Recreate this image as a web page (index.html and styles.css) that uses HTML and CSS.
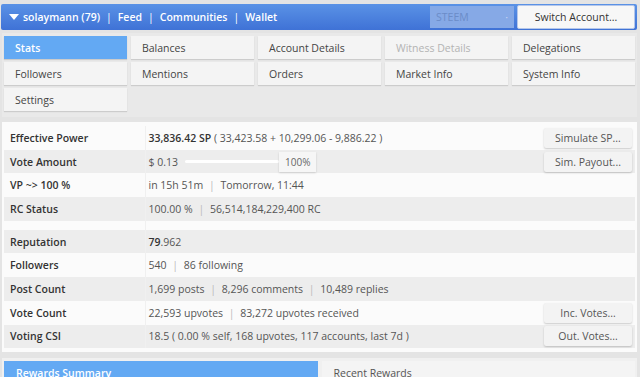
FILE: index.html
```html
<!DOCTYPE html>
<html lang="en">
<head>
  <meta charset="UTF-8">
  <title>Steem Stats</title>
  <link rel="stylesheet" href="styles.css">
</head>
<body>

<div class="topbar">
  <div class="nav">
    <span class="caret"></span>
    <span>solaymann (79)</span><span class="sep">|</span>
    <span>Feed</span><span class="sep">|</span>
    <span>Communities</span><span class="sep">|</span>
    <span>Wallet</span>
  </div>
  <div class="chain">STEEM <span class="dot">·</span></div>
  <button class="switch">Switch Account...</button>
</div>

<div class="tabs">
  <div class="tab active">Stats</div>
  <div class="tab">Balances</div>
  <div class="tab">Account Details</div>
  <div class="tab disabled">Witness Details</div>
  <div class="tab">Delegations</div>
  <div class="tab">Followers</div>
  <div class="tab">Mentions</div>
  <div class="tab">Orders</div>
  <div class="tab">Market Info</div>
  <div class="tab">System Info</div>
  <div class="tab">Settings</div>
</div>

<div class="panel">
  <table class="stats">
    <tr>
      <th>Effective Power</th>
      <td><div class="cell"><span><b>33,836.42 SP</b> ( 33,423.58 + 10,299.06 - 9,886.22 )</span><button class="act">Simulate SP...</button></div></td>
    </tr>
    <tr>
      <th>Vote Amount</th>
      <td><div class="cell"><span class="vote">$ 0.13 <span class="slider"></span><span class="pct">100%</span></span><button class="act">Sim. Payout...</button></div></td>
    </tr>
    <tr>
      <th>VP ~&gt; 100 %</th>
      <td>in 15h 51m <span class="sep">|</span> Tomorrow, 11:44</td>
    </tr>
    <tr>
      <th>RC Status</th>
      <td>100.00 % <span class="sep">|</span> 56,514,184,229,400 RC</td>
    </tr>
    <tr class="gap"><th></th><td></td></tr>
    <tr>
      <th>Reputation</th>
      <td><b>79</b>.962</td>
    </tr>
    <tr>
      <th>Followers</th>
      <td>540 <span class="sep">|</span> 86 following</td>
    </tr>
    <tr>
      <th>Post Count</th>
      <td>1,699 posts <span class="sep">|</span> 8,296 comments <span class="sep">|</span> 10,489 replies</td>
    </tr>
    <tr>
      <th>Vote Count</th>
      <td><div class="cell"><span>22,593 upvotes <span class="sep">|</span> 83,272 upvotes received</span><button class="act">Inc. Votes...</button></div></td>
    </tr>
    <tr>
      <th>Voting CSI</th>
      <td><div class="cell"><span>18.5 ( 0.00 % self, 168 upvotes, 117 accounts, last 7d )</span><button class="act">Out. Votes...</button></div></td>
    </tr>
  </table>
</div>

<div class="subtabs">
  <div class="subtab active">Rewards Summary</div>
  <div class="subtab">Recent Rewards</div>
</div>

</body>
</html>
```

FILE: styles.css
```css
* { box-sizing: border-box; }
body {
  margin: 0;
  padding-top: 4px;
  background: #e4e4e4;
  font-family: "Open Sans", sans-serif;
  font-size: 10.5px;
  color: #444;
}
.topbar {
  display: flex;
  align-items: center;
  height: 26px;
  margin: 0 3px 0 1px;
  padding: 0 2px 0 8px;
  background: linear-gradient(#5a92e6, #3f72d6);
  border-radius: 2px;
}
.nav {
  flex: 1;
  display: flex;
  align-items: center;
  color: #fff;
  font-weight: 600;
  font-size: 10.5px;
}
.nav .sep { margin: 0 6px; font-weight: 400; }
.caret {
  width: 0;
  height: 0;
  border-left: 5px solid transparent;
  border-right: 5px solid transparent;
  border-top: 6px solid #fff;
  margin-right: 4px;
}
.chain {
  width: 84px;
  height: 22px;
  display: flex;
  align-items: center;
  justify-content: space-between;
  padding: 0 6px;
  background: #86a9e6;
  color: #6b8cc8;
  font-size: 10.5px;
  margin-right: 3px;
}
.chain .dot { color: #c7d6f2; }
.switch {
  width: 118px;
  height: 24px;
  border: 1px solid #b5c7ea;
  border-radius: 2px;
  background: #f7f7f7;
  font-family: inherit;
  font-size: 10.5px;
  color: #333;
}
.tabs {
  display: grid;
  grid-template-columns: repeat(5, 1fr);
  gap: 3px 4px;
  margin: 3px 3px 0 2px;
  padding: 3px 2px 6px 2px;
  background: #e9e9e9;
}
.tab {
  height: 23px;
  display: flex;
  align-items: center;
  padding-left: 11px;
  background: #f4f4f4;
  color: #444;
  box-shadow: 0 1px 1px rgba(0,0,0,0.12);
}
.tab.active {
  background: #63a9f3;
  color: #fff;
  font-weight: 600;
}
.tab.disabled { color: #b3b3b3; }
.panel {
  margin: 5px 3px 0 2px;
  padding: 4px 2px 4px 2px;
  background: #fbfbfb;
}
.stats {
  width: 100%;
  border-collapse: collapse;
}
.stats th,
.stats td {
  height: 23.7px;
  padding: 0 6px;
  text-align: left;
  vertical-align: middle;
}
.stats th {
  width: 141px;
  font-weight: 600;
  color: #333;
  border-right: 1px solid #f0f0f0;
}
.stats td { color: #555; padding-left: 3px; padding-right: 3px; }
.stats b { font-weight: 600; color: #333; }
.stats tr:nth-child(even) { background: #ededed; }
.stats tr.gap th, .stats tr.gap td { height: 9px; background: #fbfbfb; }
.stats .sep { color: #bbb; margin: 0 3px; }
.cell {
  display: flex;
  align-items: center;
  justify-content: space-between;
}
.act {
  width: 88px;
  height: 20px;
  border: none;
  border-radius: 2px;
  background: #f3f3f3;
  box-shadow: 0 1px 2px rgba(0,0,0,0.2);
  font-family: inherit;
  font-size: 10.5px;
  color: #555;
}
.vote { display: flex; align-items: center; }
.slider {
  width: 94px;
  height: 3px;
  margin-left: 7px;
  background: #fff;
  border-radius: 2px;
}
.pct {
  height: 20px;
  padding: 0 6px;
  display: flex;
  align-items: center;
  background: #f6f6f6;
  box-shadow: 0 1px 2px rgba(0,0,0,0.15);
  color: #666;
  font-size: 10px;
}
.subtabs {
  display: grid;
  grid-template-columns: 1fr 1fr;
  gap: 4px;
  margin: 6px 3px 0 2px;
  padding: 3px 2px 0 2px;
  background: #f0f0f0;
}
.subtab {
  height: 24px;
  padding-left: 12px;
  display: flex;
  align-items: center;
  background: #f4f4f4;
  color: #555;
}
.subtab.active {
  background: #63a9f3;
  color: #fff;
  font-weight: 600;
}
```
